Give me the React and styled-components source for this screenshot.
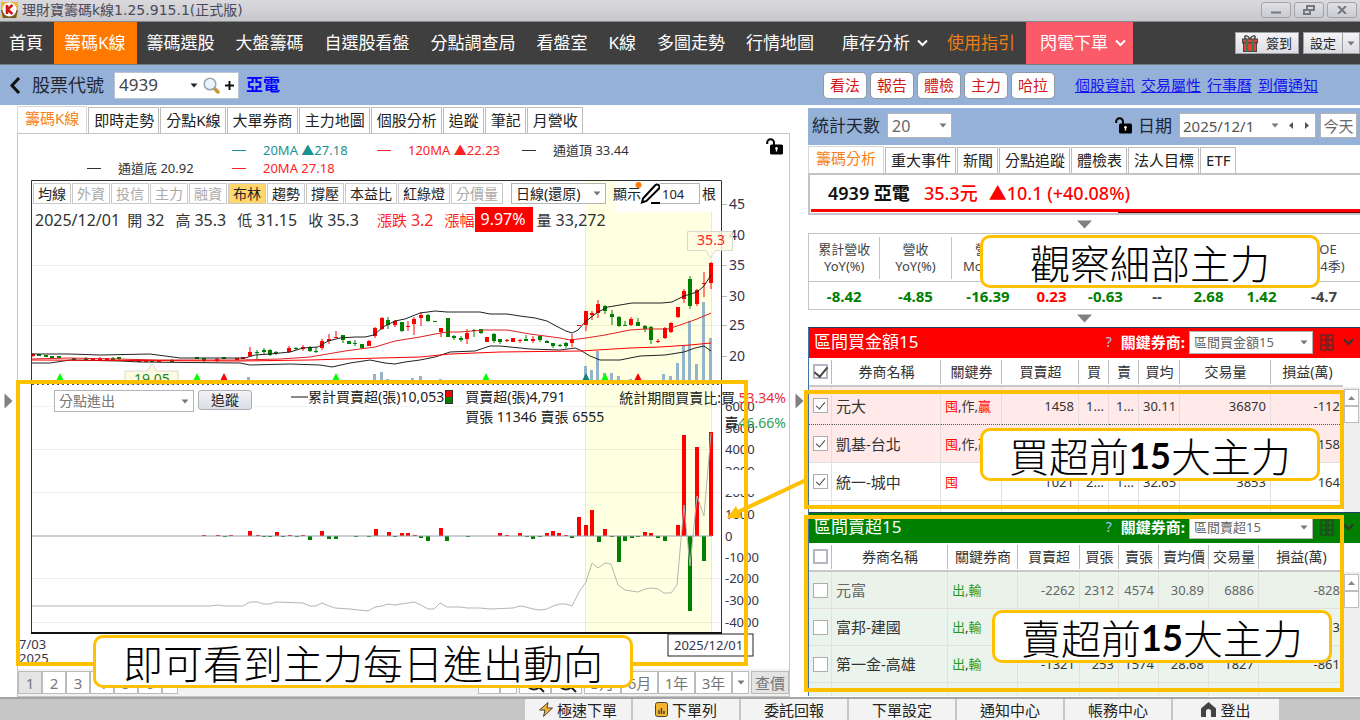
import styled, { createGlobalStyle, css } from 'styled-components'

const GlobalStyle = createGlobalStyle`
  * {
    box-sizing: border-box;
  }

  body {
    margin: 0;
    background: #fff;
    color: #222;
    font-family: 'Noto Sans', 'Noto Sans CJK TC', sans-serif;
    font-size: 15px;
    line-height: 20px;
  }

  button,
  input,
  select {
    margin: 0;
    padding: 0;
    border-radius: 0;
    font: inherit;
    color: inherit;
  }
`

/* ---------- Shell ---------- */

const Page = styled.div`
  position: relative;
  display: flex;
  flex-direction: column;
  min-height: 100vh;
  overflow: hidden;
  white-space: nowrap;
`

const TitleBar = styled.header`
  display: flex;
  align-items: center;
  height: 22px;
  padding: 0 3px 2px 1px;
  border-bottom: 1px solid #88888c;
  background: linear-gradient(#dadade, #c7c8cd);
`

const AppTitle = styled.h1`
  flex: 1;
  margin: 0 0 0 4px;
  color: #4c4958;
  font: 400 14px/18px 'DejaVu Sans', 'Noto Sans CJK TC', sans-serif;
`

const WindowButtons = styled.div`
  display: flex;
  gap: 3px;
`

const WindowButton = styled.button`
  display: grid;
  place-items: center;
  width: 30px;
  height: 16px;
  border: 1px solid #a3a3a8;
  border-radius: 3px;
  background: linear-gradient(#e0e0e4, #cbccd1);
`

const Nav = styled.nav`
  display: flex;
  align-items: stretch;
  height: 43px;
  border-bottom: 1px solid #77797d;
  background: #3f3f3f;

  > a:first-child {
    padding-left: 9px;
  }
`

const NavItem = styled.a`
  display: flex;
  align-items: center;
  gap: 7px;
  padding: 0 ${p => (p.$hot ? '7px 0 14px' : p.$menu ? '9px 0 17px' : '11px 0 10px')};
  background: ${p => (p.$active ? '#ff7800' : p.$hot ? '#fb5a69' : 'none')};
  color: ${p => (p.$accent ? '#ef7d16' : '#fff')};
  font-size: 17px;
  font-weight: 400;
  text-decoration: none;
`

const NavTools = styled.div`
  display: flex;
  align-items: center;
  gap: 4px;
  margin-left: auto;
`

const ToolButton = styled.button`
  display: flex;
  align-items: center;
  justify-content: center;
  gap: 8px;
  height: 22px;
  padding: 0 6px;
  border: 1px solid #9fa0a5;
  background: linear-gradient(#f4f4f7, #dcdde3);
  font-size: 13px;
`

const SplitButton = styled.div`
  display: flex;

  button + button {
    padding: 0 4px;
    border-left: 0;
  }
`

const StockBar = styled.section`
  display: flex;
  align-items: center;
  height: 40px;
  padding: 0 42px 0 9px;
  background: #95b1d7;
`

const BackButton = styled.button`
  display: flex;
  margin-right: 11px;
  border: 0;
  background: none;
`

const FieldLabel = styled.label`
  color: #1d2733;
  font-size: ${p => p.$size || 18}px;
`

const CodeBox = styled.div`
  display: flex;
  align-items: center;
  gap: 5px;
  width: 125px;
  height: 27px;
  margin: 0 7px 0 10px;
  padding: 0 4px;
  border: 1px solid #b9c4d4;
  background: #fff;

  input {
    flex: 1;
    min-width: 0;
    border: 0;
    color: #444;
    font-size: 17px;
  }
`

const IconButton = styled.button`
  display: flex;
  border: 0;
  background: none;
`

const StockName = styled.strong`
  flex: 1;
  color: #00f;
  font-size: 17px;
`

const PillGroup = styled.div`
  display: flex;
  gap: 3px;
  margin-right: 20px;
`

const Pill = styled.button`
  width: 44px;
  height: 27px;
  border: 1px solid #8f98a5;
  border-radius: 5px;
  background: #fff;
  color: #d01a1a;
  font-size: 15px;
`

const StockLinks = styled.div`
  display: flex;
  gap: 6px;

  a {
    color: #1414f0;
    font-size: 15px;
  }
`

const Body = styled.main`
  flex: 1;
  display: grid;
  grid-template-columns: 17px minmax(0, 773fr) 18px minmax(0, 552fr);
`

const Splitter = styled.div`
  display: grid;
  place-items: center;
`

const Column = styled.div`
  display: flex;
  flex-direction: column;
  padding-top: ${p => p.$top}px;
`

/* ---------- Tabs ---------- */

const Tabs = styled.div`
  display: flex;
  align-items: flex-end;
  gap: 1px;
  height: ${p => p.$height}px;
`

const Tab = styled.button`
  height: 26px;
  padding: 0 4px 2px 5px;
  border: 1px solid #bdbdbd;
  border-bottom: 0;
  background: #fff;
  color: #222;

  ${p =>
    p.$active &&
    css`
      height: 27px;
      padding: 0 7px 4px 7px;
      border-color: #d8d8d8;
      color: #f58220;
    `}
`

/* ---------- Chart panel ---------- */

const ChartPanel = styled.section`
  flex: 1;
  display: flex;
  flex-direction: column;
  border: 1px solid #c4c4c4;
`

const LegendBar = styled.div`
  display: flex;
  justify-content: space-between;
  height: 45px;
  padding: 4px 6px 0 69px;
`

const Legend = styled.div`
  display: grid;
  grid-template-columns: repeat(4, 145px);
  grid-auto-rows: 18px;
  padding-top: 3px;
`

const LegendItem = styled.span`
  grid-column: ${p => p.$col};
  grid-row: ${p => p.$row};
  display: flex;
  align-items: center;
  gap: 17px;
  color: ${p => p.$color};
  font-size: 13px;

  &::before {
    content: '';
    width: 14px;
    height: 1px;
    background: currentColor;
  }
`

const ChartStack = styled.div`
  display: grid;

  > * {
    grid-area: 1 / 1;
    min-width: 0;
  }
`

const ChartSvg = styled.svg`
  display: block;
  width: 100%;
`

const ChartControls = styled.div`
  z-index: 1;
  padding: 4px 0 0 15px;
`

const Toolbar = styled.div`
  display: flex;
  align-items: center;
  gap: 1px;
  height: 21px;
`

const Toggle = styled.button`
  height: 21px;
  padding: 0 4px;
  border: 1px solid #c9c9c9;
  background: ${p => (p.$on ? '#ffd76a' : '#fff')};
  color: ${p => (p.$off ? '#aaa' : '#222')};
  font-size: 14px;
  line-height: 18px;
`

const SelectBox = styled.div`
  display: flex;
  align-items: center;
  width: ${p => p.$width}px;
  height: ${p => p.$height || 22}px;
  margin-left: ${p => p.$lead || 0}px;
  padding: 0 4px;
  border: 1px solid #b4b4b4;
  background: #fff;
  color: ${p => p.$color || '#555'};
  font-size: ${p => p.$size || 14}px;

  select {
    flex: 1;
    min-width: 0;
    border: 0;
    background: none;
    appearance: none;
  }

  svg {
    pointer-events: none;
  }
`

const BarCount = styled.label`
  display: flex;
  align-items: center;
  margin-left: 6px;
  font-size: 14px;

  svg {
    margin: 0 0 0 -6px;
  }

  input {
    width: 40px;
    height: 21px;
    margin-right: 2px;
    border: 1px solid #b4b4b4;
    border-left: 0;
    padding-left: 2px;
    font-size: 13px;
  }
`

const Ohlc = styled.div`
  display: flex;
  align-items: center;
  gap: 11px;
  height: 25px;
  margin-top: 3px;
  padding-left: 2px;
  font-size: 16px;
`

const OhlcItem = styled.span`
  display: flex;
  align-items: center;
  gap: 4px;
  margin-left: ${p => p.$lead || 0}px;
  color: ${p => (p.$up ? '#f22' : '#333')};

  b {
    font-size: 15px;
    font-weight: 400;
  }
`

const UpBadge = styled.span`
  padding: 2px 7px 3px 6px;
  background: #f00;
  color: #fff;
`

const FlowRow = styled.div`
  display: flex;
  align-items: flex-start;
  margin-top: 158px;
  padding-left: 21px;
  font-size: 14px;
`

const TraceButton = styled.button`
  width: 54px;
  height: 20px;
  margin: 0 39px 0 4px;
  border: 1px solid #adafb8;
  border-radius: 3px;
  background: linear-gradient(#f3f3f7, #dcdee6);
  line-height: 16px;
`

const CumulativeKey = styled.span`
  display: flex;
  align-items: center;
  height: 14px;

  &::before {
    content: '';
    width: 17px;
    height: 2px;
    background: #888;
  }

  i {
    width: 8px;
    height: 14px;
    margin-left: 1px;
    border: 1px solid #333;
    background: linear-gradient(#f00 50%, #008000 50%);
  }
`

const DayFlow = styled.div`
  flex: 1;
  margin: -3px 0 0 12px;
`

const RatioFlow = styled.div`
  margin: -5px 3px 0 0;
  text-align: right;
  line-height: 25px;
`

const Tone = styled.span`
  color: ${p => p.$color};
`

const Pager = styled.div`
  flex: 1;
  display: flex;
  align-items: center;
  min-height: 27px;
  background: #f1f1f1;
`

const PagerButton = styled.button`
  display: grid;
  place-items: center;
  width: ${p => p.$width || 24}px;
  height: 23px;
  border: 1px solid #bbb;
  margin-right: ${p => p.$gap || 0}px;
  background: ${p => (p.$on ? '#e4e4e4' : '#fff')};
  color: #777;
  font-size: 15px;
`

const PagerSpace = styled.span`
  flex: 1;
`

/* ---------- Side panel ---------- */

const RangeBar = styled.div`
  display: flex;
  align-items: center;
  height: 37px;
  padding: 0 3px 2px 4px;
  background: #95b1d7;

  > svg {
    margin: 0 6px 0 auto;
  }
`

const DateBox = styled.div`
  display: flex;
  align-items: center;
  width: 137px;
  height: 25px;
  margin: 0 4px 0 7px;
  border: 1px solid #b4b4b4;
  background: #fff;
  color: #555;

  input {
    flex: 1;
    min-width: 0;
    border: 0;
    padding-left: 3px;
    font-size: 15px;
  }

  button {
    width: 16px;
    justify-content: center;
  }
`

const TodayButton = styled.button`
  width: 37px;
  height: 25px;
  border: 1px solid #b4b4b4;
  background: #fff;
  color: #666;
`

const Quote = styled.div`
  height: 42px;
  padding: 4px 0 0 1px;
  border: 2px solid #c3c3c8;
  border-right: 0;

  p {
    display: flex;
    gap: 14px;
    margin: 0;
    padding: 0 0 2px 17px;
    color: #f00;
    font-size: 18px;
    font-weight: 500;
    line-height: 28px;
  }

  strong {
    color: #111;
    font-weight: 600;
  }

  span + span {
    margin-left: -3px;
  }
`

const RangeLine = styled.div`
  height: 3px;
  border-top: 3px solid #f00;

  &::after {
    content: '';
    display: block;
    width: 44%;
    height: 1px;
    margin-left: auto;
    background: #600;
  }
`

const Fold = styled.button`
  display: grid;
  place-items: center;
  height: ${p => p.$height}px;
  border: 0;
  background: none;
`

const Metrics = styled.table`
  width: 100%;
  border: 1px solid #c4c4c4;
  border-right: 0;
  border-collapse: collapse;
  table-layout: fixed;

  th {
    height: 48px;
    padding: 0;
    border-bottom: 1px solid #c4c4c4;
    color: #444;
    font-size: 13px;
    font-weight: 400;
    line-height: 17px;
    background: linear-gradient(#c4c4c4, #c4c4c4) right center / 1px 42px no-repeat;
  }

  th:nth-child(n + 3) {
    background: none;
  }

  td {
    height: 28px;
    padding: 0;
    font-size: 15px;
    font-weight: 700;
    text-align: center;
  }
`

const Section = styled.section`
  border-top: 1px solid #24406b;
  border-left: 1px solid #3f73a8;
`

const SectionHead = styled.div`
  display: flex;
  align-items: center;
  height: 30px;
  padding: 0 6px 2px 5px;
  background: ${p => p.$color};
  color: #fff;

  h2 {
    flex: 1;
    margin: 0;
    font-size: 17px;
    font-weight: 400;
  }

  label {
    margin: 0 4px 0 9px;
    font-size: 15px;
    font-weight: 700;
  }

  button + button {
    margin-left: 9px;
  }

  button {
    margin-left: 7px;
  }
`

const HelpMark = styled.span`
  color: #a9c4ee;
  font-size: 14px;
`

const TableArea = styled.div`
  display: grid;
  grid-template-columns: minmax(0, 1fr) 17px;
  height: ${p => p.$height}px;
  overflow: hidden;
`

const BrokerTable = styled.table`
  width: 100%;
  align-self: start;
  border-collapse: separate;
  border-spacing: 0;
  table-layout: fixed;
  font-size: 13px;

  th {
    height: 29px;
    padding: 0;
    border-bottom: 2px solid #c8c8c8;
    background: linear-gradient(#bbb, #bbb) right 2px / 1px 24px no-repeat;
    color: #333;
    font-size: 14px;
    font-weight: 400;
    overflow: hidden;
  }

  td {
    height: ${p => p.$row}px;
    padding: 0 4px;
    border-right: 1px solid #e3dfe0;
    border-bottom: 1px solid #e3dfe0;
    text-align: right;
    overflow: hidden;
  }

  td:nth-child(-n + 3) {
    text-align: left;
    font-size: 15px;
  }

  td:nth-child(3) {
    font-size: 13px;
  }

  td:last-child {
    border-right: 0;
  }
`

const BrokerRow = styled.tr`
  background: ${p => p.$fill};
  color: ${p => (p.$dim ? '#666' : '#333')};

  ${p =>
    p.$focused &&
    css`
      td {
        border-bottom: 1px dotted #555;
      }
    `}
`

const Check = styled.input`
  appearance: none;
  display: grid;
  place-items: center;
  width: 15px;
  height: 15px;
  margin: 0 auto;
  border: ${p => (p.$head ? '2px solid #b3b6c4' : '1px solid #adadad')};
  background: #fff;

  &:checked::after {
    content: '';
    width: ${p => (p.$head ? 6 : 4)}px;
    height: ${p => (p.$head ? 11 : 8)}px;
    margin-top: -2px;
    border: solid #444;
    border-width: 0 ${p => (p.$head ? '2px 2px' : '1px 1px')} 0;
    transform: rotate(40deg);
  }
`

const CheckCell = styled.td`
  && {
    padding: 0;
  }
`

const ScrollTrack = styled.div`
  display: flex;
  flex-direction: column;
  padding: 31px 1px 3px 1px;
  background: linear-gradient(#fff 29px, #eee 29px);
`

const ScrollButton = styled.button`
  display: grid;
  place-items: center;
  height: 17px;
  margin-top: ${p => (p.$end ? 'auto' : 0)};
  border: 1px solid #bdbdbd;
  background: #fff;
`

/* ---------- Footer ---------- */

const Footer = styled.footer`
  display: flex;
  justify-content: flex-end;
  gap: 2px;
  height: 23px;
  padding-right: 81px;
  border-top: 2px solid #a5a5a5;
  background: #c6c6c6;
`

const FooterButton = styled.button`
  display: flex;
  align-items: center;
  justify-content: center;
  gap: 4px;
  width: 106px;
  border: 0;
  background: #f3f3f3;
  font-size: 15px;
`

/* ---------- Guide layer, lies over the whole page ---------- */

const Highlight = styled.div`
  position: absolute;
  z-index: 2;
  left: ${p => p.$x}px;
  top: ${p => p.$y}px;
  width: ${p => p.$w}px;
  height: ${p => p.$h}px;
  border: 4px solid #ffc000;
  pointer-events: none;
`

const Callout = styled.p`
  position: absolute;
  z-index: 4;
  left: ${p => p.$x}px;
  top: ${p => p.$y}px;
  display: flex;
  align-items: center;
  justify-content: center;
  width: ${p => p.$w || 340}px;
  height: 53px;
  margin: 0;
  border: 3px solid #ffc000;
  border-radius: 10px;
  background: #fff;
  color: #000;
  font-family: 'Noto Sans CJK TC', sans-serif;
  font-size: 40px;
  font-weight: 300;

  b {
    font-family: Lato, sans-serif;
    font-size: 36px;
    font-weight: 700;
  }
`

const Pointer = styled.svg`
  position: absolute;
  z-index: 3;
  left: 724px;
  top: 476px;
  pointer-events: none;
`

/* ---------- Icons ---------- */

const Caret = ({ color = '#777' }) => (
  <svg width="8" height="5" viewBox="0 0 8 5">
    <path d="M0.5 0.5h7L4 4.5z" fill={color} />
  </svg>
)

const Chevron = ({ color = '#fff' }) => (
  <svg width="11" height="8" viewBox="0 0 11 8" fill="none" stroke={color} strokeWidth="2">
    <path d="M1 1.5l4.5 4.5L10 1.5" />
  </svg>
)

const SideArrow = () => (
  <svg width="9" height="16" viewBox="0 0 9 16">
    <path d="M0.5 0.5L8.5 8L0.5 15.5z" fill="#808080" />
  </svg>
)

const FoldArrow = () => (
  <svg width="15" height="9" viewBox="0 0 15 9">
    <path d="M0 0.5h15L7.5 8.5z" fill="#808080" />
  </svg>
)

const LockIcon = () => (
  <svg width="17" height="17" viewBox="0 0 17 17">
    <path d="M1.2 6V4.6a3.4 3.4 0 0 1 6.8 0V8" fill="none" stroke="#000" strokeWidth="2" />
    <rect x="4" y="6.5" width="13" height="10" rx="1.5" fill="#000" />
    <path d="M10.5 9a1.4 1.4 0 0 1 .7 2.600v2h-1.400v-2a1.4 1.4 0 0 1 .7-2.600z" fill="#fff" />
  </svg>
)

const LogoIcon = () => (
  <svg width="17" height="18" viewBox="0 0 17 18">
    <path d="M0 1h17v6l-1 10H1L0 7z" fill="#e3b93c" />
    <path d="M0 9l2 8h13l2-8z" fill="#7a5a20" />
    <circle cx="8.500" cy="8.500" r="7" fill="#fff" />
    <path d="M6 4v9M11.500 4L6.500 8.500l5 4.500" fill="none" stroke="#d01818" strokeWidth="2.600" />
  </svg>
)

const SearchIcon = () => (
  <svg width="17" height="17" viewBox="0 0 17 17">
    <path d="M11 11l4 4" stroke="#c9962f" strokeWidth="3.500" strokeLinecap="round" />
    <circle cx="7" cy="7" r="5.800" fill="#e9f4fb" stroke="#9aa7b3" strokeWidth="1.500" />
  </svg>
)

const PlusIcon = () => (
  <svg width="9" height="9" viewBox="0 0 9 9">
    <path d="M4.500 0v9M0 4.500h9" stroke="#111" strokeWidth="2" />
  </svg>
)

const GiftIcon = () => (
  <svg width="16" height="17" viewBox="0 0 16 17">
    <path d="M8 4C6 0 2 0 3 3s5 1 5 1zM8 4c2-4 6-4 5-1s-5 1-5 1z" fill="none" stroke="#444" strokeWidth="1.500" />
    <rect x="0.500" y="4" width="15" height="4" fill="#e2403a" stroke="#444" />
    <rect x="1.500" y="8" width="13" height="8.500" fill="#e2403a" stroke="#444" />
    <path d="M5 4v12.500M11 4v12.500" stroke="#3b7a4a" strokeWidth="2" />
  </svg>
)

const PenIcon = () => (
  <svg width="25" height="23" viewBox="0 0 25 23">
    <circle cx="3.500" cy="3" r="3" fill="#ff7800" />
    <path d="M8 16.500L20 3.500a2 2 0 0 1 4 3L11.500 19l-4.500 1.500z" fill="#fff" stroke="#000" strokeWidth="2" />
    <path d="M16 21h9" stroke="#000" strokeWidth="2" />
  </svg>
)

const GridIcon = () => (
  <svg width="14" height="17" viewBox="0 0 14 17" fill="none" stroke="#333" strokeOpacity="0.75" strokeWidth="1.500">
    <path d="M1 1h5v15H1zM8 1h5v15H8zM1 6h5M8 6h5M1 11h5M8 11h5" />
  </svg>
)

const ZoomIcon = () => (
  <svg width="24" height="20" viewBox="0 0 24 20" fill="none" stroke="#222" strokeWidth="2">
    <circle cx="11" cy="9" r="7.500" />
    <path d="M16 14l5 5M7.500 9h7" />
  </svg>
)

const BoltIcon = () => (
  <svg width="14" height="15" viewBox="0 0 14 15">
    <path d="M9 0.500L0.500 8H6L4.500 14.500L13.500 6H8z" fill="#f7b52c" stroke="#444" />
  </svg>
)

const ReportIcon = () => (
  <svg width="13" height="15" viewBox="0 0 13 15">
    <rect x="0.500" y="0.500" width="12" height="14" rx="2" fill="#f7b52c" stroke="#444" />
    <path d="M4 12V8M6.500 12V6M9 12V9" stroke="#444" strokeWidth="1.500" />
  </svg>
)

const HomeIcon = () => (
  <svg width="15" height="15" viewBox="0 0 15 15">
    <path d="M7.500 0L15 6.500V15h-5V9.500a2.500 2.500 0 0 0-5 0V15H0V6.500z" fill="#444" />
  </svg>
)

/* ---------- Chart data ---------- */

// [x, body top, body bottom, high, low, up]
const candles = [
  [33, 354, 356, 353, 357, 1], [39, 354, 356, 354, 356, 0], [46, 355, 357, 355, 357, 0],
  [52, 356, 358, 356, 358, 0], [59, 356, 358, 356, 358, 0], [74, 358, 360, 358, 360, 0],
  [86, 358, 360, 357, 360, 0], [93, 359, 361, 358, 361, 1], [100, 358, 361, 357, 361, 1],
  [107, 358, 361, 358, 361, 1], [113, 358, 360, 357, 361, 0], [119, 357, 359, 357, 360, 0],
  [132, 360, 361, 359, 361, 0], [139, 360, 362, 360, 362, 1], [146, 360, 362, 360, 362, 1],
  [152, 361, 362, 360, 362, 0], [159, 360, 362, 360, 362, 1], [172, 360, 362, 359, 362, 0],
  [197, 357, 359, 357, 359, 0], [204, 358, 361, 358, 362, 0], [217, 359, 361, 358, 362, 1],
  [224, 357, 359, 357, 359, 0], [237, 358, 360, 358, 360, 1], [243, 357, 359, 357, 359, 1],
  [250, 352, 356, 347, 356, 1], [257, 352, 353, 350, 359, 0], [264, 350, 352, 348, 354, 0],
  [270, 350, 355, 349, 356, 0], [276, 352, 353, 351, 355, 0], [289, 348, 352, 346, 353, 1],
  [296, 348, 349, 347, 350, 0], [303, 347, 349, 345, 351, 1], [310, 347, 351, 346, 352, 0],
  [316, 351, 352, 347, 353, 0], [322, 341, 348, 339, 350, 1], [329, 339, 341, 334, 344, 1],
  [336, 337, 338, 331, 338, 1], [343, 335, 340, 335, 343, 0], [349, 341, 344, 341, 344, 0],
  [355, 343, 344, 340, 346, 0], [362, 344, 348, 344, 349, 0], [369, 341, 346, 340, 346, 1],
  [375, 328, 336, 327, 338, 1], [382, 318, 329, 317, 330, 1], [388, 320, 325, 317, 329, 0],
  [395, 321, 325, 320, 327, 1], [402, 322, 331, 322, 332, 0], [408, 326, 327, 321, 331, 1],
  [414, 319, 324, 317, 335, 1], [421, 315, 318, 312, 326, 1], [428, 315, 321, 314, 322, 0],
  [435, 321, 322, 321, 322, 0], [441, 328, 332, 328, 337, 1], [448, 318, 337, 318, 337, 0],
  [454, 336, 338, 335, 340, 0], [461, 338, 340, 336, 342, 0], [467, 333, 339, 329, 344, 1],
  [474, 330, 331, 329, 337, 0], [481, 329, 333, 329, 334, 0], [487, 337, 342, 337, 342, 1],
  [494, 334, 341, 333, 343, 0], [500, 339, 342, 339, 344, 0], [507, 340, 341, 339, 342, 1],
  [513, 338, 342, 338, 342, 1], [520, 340, 341, 339, 343, 1], [526, 339, 341, 335, 341, 0],
  [533, 339, 341, 336, 343, 1], [540, 336, 340, 336, 342, 0], [547, 341, 343, 340, 343, 0],
  [553, 343, 346, 343, 348, 0], [560, 345, 346, 344, 347, 0], [566, 343, 346, 342, 348, 0],
  [572, 339, 343, 334, 347, 1], [579, 325, 326, 325, 326, 1], [586, 311, 325, 311, 331, 1],
  [592, 313, 315, 311, 320, 1], [598, 304, 313, 300, 318, 1], [605, 306, 311, 305, 314, 0],
  [612, 314, 317, 310, 325, 0], [619, 317, 326, 316, 327, 0], [625, 325, 326, 321, 326, 0],
  [631, 319, 325, 317, 326, 1], [638, 322, 326, 318, 326, 0], [645, 326, 329, 325, 332, 0],
  [651, 327, 340, 326, 344, 0], [658, 341, 342, 339, 343, 1], [665, 328, 338, 327, 339, 1],
  [671, 323, 332, 322, 333, 1], [678, 307, 317, 307, 318, 1], [684, 291, 299, 289, 303, 1],
  [690, 279, 306, 276, 309, 0], [697, 290, 304, 289, 306, 1], [704, 283, 284, 272, 297, 1],
  [711, 263, 283, 262, 289, 1],
]

const volumes = [
  [249, 377], [375, 374], [382, 372], [388, 379], [413, 378], [421, 376], [441, 379],
  [586, 366], [592, 370], [598, 351], [605, 373], [612, 373], [619, 376], [631, 379],
  [664, 374], [671, 376], [678, 363], [684, 345], [690, 321], [697, 364], [704, 302], [711, 338],
]

// [x, signed bar length]
const netBuys = [
  [204, 1], [218, 1], [225, -1], [231, 1], [250, 5], [258, 1], [264, -1], [270, -1], [277, 4],
  [283, -1], [290, 1], [297, -1], [303, 1], [310, -4], [322, 5], [329, -3], [336, -3], [356, -1],
  [369, -1], [376, 7], [389, 4], [395, -1], [402, 3], [408, 3], [415, 1], [421, -2], [428, -5],
  [441, 8], [447, -5], [468, -1], [500, 3], [507, 1], [520, 3], [527, -1], [533, -3], [540, -1],
  [547, 3], [553, 5], [559, 3], [566, 1], [572, -2], [579, 19], [586, 11], [592, 26], [599, -6],
  [605, 7], [612, -1], [619, -26], [625, -5], [632, -2], [638, -1], [645, 4], [651, 3], [658, -2],
  [665, -5], [678, 11], [684, 101], [690, -75], [697, 89], [704, -25], [711, 104],
]

const upperBand =
  '31,354 70,354 100,355 150,354 165,356 180,358 245,358 255,355 270,354 290,352 303,348 318,347 328,341 340,338 355,337 365,337 374,335 383,327 395,321 405,319 420,313 435,311 447,312 480,312 490,314 507,314 520,316 535,318 547,321 558,327 566,331 572,333 578,330 586,321 598,312 608,307 620,305 632,303 662,303 672,302 684,296 697,292 704,286 711,275'
const lowerBand =
  '31,363 50,363 70,360 120,361 140,362 240,363 250,365 290,364 320,365 332,367 350,363 370,360 385,363 395,364 405,362 420,360 435,357 450,352 475,351 490,346 500,346 530,349 560,350 575,348 580,350 590,356 600,360 620,360 640,356 665,355 684,352 695,348 704,346 711,351'
const ma20 =
  '31,359 70,358 160,360 240,360 280,359 310,357 345,351 375,347 395,341 420,337 435,334 447,332 460,332 485,330 507,330 530,334 560,338 570,340 586,338 605,335 630,330 645,329 668,329 680,325 697,319 711,313'
const ma120 =
  '31,360 240,361 310,360 380,358 420,357 450,354 500,352 580,351 630,348 660,347 690,345 711,343'
const cumulative =
  '31,606 210,606 218,605 225,606 243,606 250,602 258,602 263,604 270,604 276,602 303,603 310,606 316,606 322,603 329,606 335,608 350,609 368,611 375,607 382,606 388,604 395,605 414,602 421,605 428,609 434,609 440,603 447,607 460,607 467,608 480,608 490,609 513,608 520,606 526,607 533,609 540,610 547,609 553,606 560,604 566,604 572,606 579,592 586,582 592,563 598,568 605,563 611,564 618,585 625,590 638,592 645,589 651,588 658,589 664,593 671,593 677,585 684,505 690,566 697,496 704,516 711,433'

const signals = [
  [60, '#0f0'], [197, '#0f0'], [224, '#f00'], [336, '#0f0'],
  [486, '#0f0'], [586, '#108080'], [605, '#0f0'], [638, '#f00'],
]

const priceTicks = [[45, 204], [40, 235], [35, 265], [30, 296], [25, 325], [20, 356]]
const flowTicks = [
  [6000, 406], [5000, 428], [4000, 449], [3000, 471], [2000, 492], [1000, 514], [0, 536],
  [-1000, 557], [-2000, 578], [-3000, 600], [-4000, 622],
]

const StockChart = () => (
  <ChartSvg viewBox="18 179 771 490" role="img" aria-label="籌碼K線">
    <rect x="586" y="181" width="125" height="452" fill="#ffffe1" />
    <rect x="616" y="181" width="104" height="31" fill="#fff" />
    <path d="M585.500 212V633M711.500 212V633" stroke="#e8e8dc" />
    {[265, 325, 449, 492, 578, 622].map(y => (
      <path key={y} d={`M32 ${y}.5H721`} stroke="#000" strokeOpacity="0.07" />
    ))}
    <path d="M32 406.500H721" stroke="#000" strokeOpacity="0.05" />

    {volumes.map(([x, y]) => (
      <rect key={x} x={x - 2} y={y} width="3" height={383 - y} fill="#94b4cc" />
    ))}
    {candles.map(([x, top, bottom, high, low, up]) => (
      <g key={x} fill={up ? '#f00' : '#008000'}>
        <rect x={x - 0.5} y={high} width="1" height={low - high} />
        <rect x={x - 2} y={top} width="4" height={bottom - top} />
      </g>
    ))}
    <g fill="none" strokeWidth="1">
      <polyline points={upperBand} stroke="#222" />
      <polyline points={lowerBand} stroke="#222" />
      <polyline points={ma20} stroke="#d22" />
      <polyline points={ma120} stroke="#f00" />
    </g>
    {signals.map(([x, color]) => (
      <path key={x} d={`M${x} 373l4 8h-8z`} fill={color} />
    ))}

    <path d="M125 371h22l5-7l5 7h21v14h-53z" fill="#fffbe2" stroke="#d8d8d0" />
    <text x="152" y="384" fill="#228b22" fontSize="14" textAnchor="middle">19.05</text>
    <rect x="32" y="385" width="553" height="20" fill="#fff" />
    <path d="M32 384.500H721" stroke="#555" strokeDasharray="2 3" />

    {netBuys.map(([x, v]) => (
      <rect key={x} x={x - 2} y={v > 0 ? 536 - v : 536} width="4" height={Math.abs(v)} fill={v > 0 ? '#f00' : '#008000'} />
    ))}
    <polyline points={cumulative} fill="none" stroke="#b5b5b5" />
    <path d="M32 536H712" stroke="#93a0ae" />

    <path d="M31.500 633V180.500H721.500V633" fill="none" stroke="#333" />
    <path d="M31 633H722" stroke="#111" strokeWidth="2" />
    <g fill="#36344a" fontSize="14">
      {priceTicks.map(([v, y]) => (
        <g key={v}>
          <path d={`M722 ${y}.5h5`} stroke="#bbb" />
          <text x="729" y={y + 5}>{v}</text>
        </g>
      ))}
    </g>
    <g fill="#36344a" fontSize="13">
      {flowTicks.map(([v, y]) => (
        <text key={v} x="725" y={y + 5}>{v}</text>
      ))}
      <rect x="724" y="470" width="36" height="24" fill="#fff" />
      <text x="19" y="649">7/03</text>
      <text x="19" y="663">2025</text>
      <rect x="668" y="634" width="85" height="22" fill="#fff" stroke="#222" />
      <text x="674" y="650">2025/12/01</text>
    </g>

    <path d="M687.500 231.500h45v19h-17l-5 7l-5-7h-18z" fill="#fffbe2" fillOpacity="0.8" stroke="#d8d8d0" />
    <text x="711" y="245" fill="#f22" fontSize="14" textAnchor="middle">35.3</text>
  </ChartSvg>
)

/* ---------- Lists ---------- */

const chartTabs = ['籌碼K線', '即時走勢', '分點K線', '大單券商', '主力地圖', '個股分析', '追蹤', '筆記', '月營收']
const sideTabs = ['籌碼分析', '重大事件', '新聞', '分點追蹤', '體檢表', '法人目標', 'ETF']
const offToggles = ['外資', '投信', '主力', '融資', '分價量']
const toggles = ['均線', '外資', '投信', '主力', '融資', '布林', '趨勢', '撐壓', '本益比', '紅綠燈', '分價量']

const metrics = [
  [71, '累計營收', 'YoY(%)', '-8.42'],
  [72, '營收', 'YoY(%)', '-4.85'],
  [73, '營收', 'MoM(%)', '-16.39'],
  [54, '', '', '0.23'],
  [54, '', '', '-0.63'],
  [49, '', '', '--'],
  [54, '', '', '2.68'],
  [52, '', '', '1.42'],
  [73, 'ROE', '(近4季)', '-4.7'],
]
const metricColor = v => (v === '0.23' ? '#f00' : v === '--' || v === '-4.7' ? '#444' : '#008000')

const buyTable = {
  widths: [23, 109, 61, 77, 30, 30, 41, 91, 73],
  heads: ['券商名稱', '關鍵券', '買賣超', '買', '賣', '買均', '交易量', '損益(萬)'],
  rows: [
    ['元大', '囤,作,贏', '1458', '1...', '1...', '30.11', '36870', '-112'],
    ['凱基-台北', '囤,作,贏', '', '', '', '', '', '158'],
    ['統一-城中', '囤', '1021', '2...', '1...', '32.65', '3853', '164'],
    ['', '', '', '', '', '', '', ''],
  ],
  fills: ['#ffe9e9', '#ffe9e9', '#fff', '#fff'],
}

const sellTable = {
  widths: [23, 116, 70, 62, 39, 40, 50, 50, 85],
  heads: ['券商名稱', '關鍵券商', '買賣超', '買張', '賣張', '賣均價', '交易量', '損益(萬)'],
  rows: [
    ['元富', '出,輸', '-2262', '2312', '4574', '30.89', '6886', '-828'],
    ['富邦-建國', '出,輸', '', '', '', '', '', '3'],
    ['第一金-高雄', '出,輸', '-1321', '253', '1574', '28.68', '1827', '-861'],
    ['', '', '', '', '', '', '', ''],
  ],
  fills: ['#eaf2e9', '#eaf4ec', '#eaf4ec', '#eaf4ec'],
}

const Tags = ({ value }) =>
  value.split(',').map((tag, i) => (
    <span key={tag}>
      {i > 0 && ','}
      <Tone $color={tag === '作' ? '#333' : tag === '出' || tag === '輸' ? '#1f9a1f' : '#f00'}>{tag}</Tone>
    </span>
  ))

const Brokers = ({ title, color, height, option, data, buy }) => (
  <Section>
    <SectionHead $color={color}>
      <h2>{title}</h2>
      <HelpMark>?</HelpMark>
      <label htmlFor={option}>關鍵券商:</label>
      <SelectBox $width={124} $height={23} $size={13} $color="#666">
        <select id={option}>
          <option>{option}</option>
        </select>
        <Caret />
      </SelectBox>
      <IconButton aria-label="欄位"><GridIcon /></IconButton>
      <IconButton aria-label="收合"><Chevron color="#333" /></IconButton>
    </SectionHead>
    <TableArea $height={height}>
      <BrokerTable $row={buy ? 38 : 37}>
        <colgroup>
          {data.widths.map((w, i) => <col key={i} style={{ width: w }} />)}
        </colgroup>
        <thead>
          <tr>
            <th><Check $head type="checkbox" defaultChecked={buy} aria-label="全選" /></th>
            {data.heads.map(h => <th key={h}>{h}</th>)}
          </tr>
        </thead>
        <tbody>
          {data.rows.map((row, r) => (
            <BrokerRow key={r} $fill={data.fills[r]} $dim={!buy && r === 0} $focused={buy && r === 0}>
              <CheckCell>
                {row[0] && <Check type="checkbox" defaultChecked={buy} aria-label={row[0]} />}
              </CheckCell>
              {row.map((cell, c) => <td key={c}>{c === 1 && cell ? <Tags value={cell} /> : cell}</td>)}
            </BrokerRow>
          ))}
        </tbody>
      </BrokerTable>
      <ScrollTrack>
        <ScrollButton aria-label="向上"><svg width="7" height="4"><path d="M0 4h7L3.500 0z" fill="#888" /></svg></ScrollButton>
        <ScrollButton aria-label="捲軸" />
        <ScrollButton $end aria-label="向下"><Caret color="#888" /></ScrollButton>
      </ScrollTrack>
    </TableArea>
  </Section>
)

const App = () => (
  <>
    <GlobalStyle />
    <Page>
      <TitleBar>
        <LogoIcon />
        <AppTitle>理財寶籌碼k線1.25.915.1(正式版)</AppTitle>
        <WindowButtons>
          <WindowButton aria-label="最小化"><svg width="10" height="8"><path d="M0 6.500h10" stroke="#77777f" strokeWidth="2" /></svg></WindowButton>
          <WindowButton aria-label="還原"><svg width="12" height="10" fill="none" stroke="#77777f" strokeWidth="2"><path d="M4 4V1h7v4H8M1 5h6v4H1z" /></svg></WindowButton>
          <WindowButton aria-label="關閉"><svg width="10" height="8"><path d="M1 0l8 8M9 0L1 8" stroke="#77777f" strokeWidth="2" /></svg></WindowButton>
        </WindowButtons>
      </TitleBar>

      <Nav>
        <NavItem href="#home">首頁</NavItem>
        <NavItem href="#chip" $active>籌碼K線</NavItem>
        <NavItem href="#pick">籌碼選股</NavItem>
        <NavItem href="#market">大盤籌碼</NavItem>
        <NavItem href="#watch">自選股看盤</NavItem>
        <NavItem href="#branch">分點調查局</NavItem>
        <NavItem href="#room">看盤室</NavItem>
        <NavItem href="#kline">K線</NavItem>
        <NavItem href="#multi">多圖走勢</NavItem>
        <NavItem href="#map">行情地圖</NavItem>
        <NavItem href="#stock" $menu>庫存分析 <Chevron /></NavItem>
        <NavItem href="#guide" $accent>使用指引</NavItem>
        <NavItem href="#order" $hot>閃電下單 <Chevron /></NavItem>
        <NavTools>
          <ToolButton><GiftIcon />簽到</ToolButton>
          <SplitButton>
            <ToolButton>設定</ToolButton>
            <ToolButton aria-label="更多設定"><Caret /></ToolButton>
          </SplitButton>
        </NavTools>
      </Nav>

      <StockBar>
        <BackButton aria-label="返回">
          <svg width="12" height="17" viewBox="0 0 12 17"><path d="M10 1L3 8.500L10 16" fill="none" stroke="#111" strokeWidth="3" /></svg>
        </BackButton>
        <FieldLabel htmlFor="code">股票代號</FieldLabel>
        <CodeBox>
          <input id="code" defaultValue="4939" />
          <Caret color="#222" />
          <IconButton aria-label="搜尋"><SearchIcon /></IconButton>
          <IconButton aria-label="加入"><PlusIcon /></IconButton>
        </CodeBox>
        <StockName>亞電</StockName>
        <PillGroup>
          {['看法', '報告', '體檢', '主力', '哈拉'].map(t => <Pill key={t}>{t}</Pill>)}
        </PillGroup>
        <StockLinks>
          {['個股資訊', '交易屬性', '行事曆', '到價通知'].map(t => <a key={t} href="#info">{t}</a>)}
        </StockLinks>
      </StockBar>

      <Body>
        <Splitter><SideArrow /></Splitter>
        <Column $top={1}>
          <Tabs $height={27}>
            {chartTabs.map((t, i) => <Tab key={t} $active={i === 0}>{t}</Tab>)}
          </Tabs>
          <ChartPanel>
            <LegendBar>
              <Legend>
                <LegendItem $col={2} $row={1} $color="#1b9292">20MA ▲27.18</LegendItem>
                <LegendItem $col={3} $row={1} $color="#f22">120MA ▲22.23</LegendItem>
                <LegendItem $col={4} $row={1} $color="#333">通道頂 33.44</LegendItem>
                <LegendItem $col={1} $row={2} $color="#333">通道底 20.92</LegendItem>
                <LegendItem $col={2} $row={2} $color="#f22">20MA 27.18</LegendItem>
              </Legend>
              <LockIcon />
            </LegendBar>
            <ChartStack>
              <StockChart />
              <ChartControls>
                <Toolbar>
                  {toggles.map(t => (
                    <Toggle key={t} $on={t === '布林'} $off={offToggles.includes(t)}>{t}</Toggle>
                  ))}
                  <SelectBox $lead={7} $width={95} $height={21} $color="#222">
                    <select aria-label="週期"><option>日線(還原)</option></select>
                    <Caret />
                  </SelectBox>
                  <BarCount>
                    顯示
                    <PenIcon />
                    <input defaultValue="104" />
                    根
                  </BarCount>
                </Toolbar>
                <Ohlc>
                  <OhlcItem>2025/12/01</OhlcItem>
                  <OhlcItem $lead={-4}><b>開</b>32</OhlcItem>
                  <OhlcItem><b>高</b>35.3</OhlcItem>
                  <OhlcItem><b>低</b>31.15</OhlcItem>
                  <OhlcItem><b>收</b>35.3</OhlcItem>
                  <OhlcItem $up $lead={7}><b>漲跌</b>3.2</OhlcItem>
                  <OhlcItem $up><b>漲幅</b></OhlcItem>
                  <OhlcItem $lead={-11}><UpBadge>9.97%</UpBadge><b>量</b>33,272</OhlcItem>
                </Ohlc>
                <FlowRow>
                  <SelectBox $width={140} $height={22} $color="#777">
                    <select aria-label="指標"><option>分點進出</option></select>
                    <Caret />
                  </SelectBox>
                  <TraceButton>追蹤</TraceButton>
                  <CumulativeKey>累計買賣超(張)10,053<i /></CumulativeKey>
                  <DayFlow>
                    買賣超(張)4,791
                    <br />
                    買張 11346 賣張 6555
                  </DayFlow>
                  <RatioFlow>
                    統計期間買賣比:買 <Tone $color="#e8303a">53.34%</Tone>
                    <div>賣<Tone $color="#2f9e4f">46.66%</Tone></div>
                  </RatioFlow>
                </FlowRow>
              </ChartControls>
            </ChartStack>
            <Pager>
              <PagerButton $on>1</PagerButton>
              {[2, 3, 4, 5, 6].map(n => <PagerButton key={n}>{n}</PagerButton>)}
              <PagerButton $width={16} aria-label="下一頁" />
              <PagerSpace />
              <PagerButton $width={22} aria-label="往前" />
              <PagerButton $width={17} $gap={2} aria-label="往後" />
              <PagerButton $width={32} aria-label="縮小"><ZoomIcon /></PagerButton>
              <PagerButton $width={31} $gap={2} aria-label="放大"><ZoomIcon /></PagerButton>
              {['3月', '6月', '1年', '3年'].map(t => <PagerButton key={t} $width={37}>{t}</PagerButton>)}
              <PagerButton $width={17} $gap={2} aria-label="更多區間"><Caret /></PagerButton>
              <PagerButton $on $width={38}>查價</PagerButton>
            </Pager>
          </ChartPanel>
        </Column>

        <Splitter><SideArrow /></Splitter>
        <Column $top={3}>
          <RangeBar>
            <FieldLabel $size={17} htmlFor="days">統計天數</FieldLabel>
            <SelectBox $lead={7} $width={65} $height={25} $size={16} $color="#666">
              <select id="days"><option>20</option></select>
              <Caret />
            </SelectBox>
            <LockIcon />
            <FieldLabel $size={17} htmlFor="date">日期</FieldLabel>
            <DateBox>
              <input id="date" defaultValue="2025/12/1" />
              <IconButton aria-label="選日期"><Caret /></IconButton>
              <IconButton aria-label="前一天"><svg width="4" height="7"><path d="M4 0v7L0 3.500z" fill="#555" /></svg></IconButton>
              <IconButton aria-label="後一天"><svg width="4" height="7"><path d="M0 0v7L4 3.500z" fill="#555" /></svg></IconButton>
            </DateBox>
            <TodayButton>今天</TodayButton>
          </RangeBar>
          <Tabs $height={28}>
            {sideTabs.map((t, i) => <Tab key={t} $active={i === 0}>{t}</Tab>)}
          </Tabs>
          <Quote>
            <p><strong>4939 亞電</strong><span>35.3元</span><span>▲10.1 (+40.08%)</span></p>
            <RangeLine />
          </Quote>
          <Fold $height={18} aria-label="收合報價"><FoldArrow /></Fold>
          <Metrics>
            <colgroup>
              {metrics.map(([w], i) => <col key={i} style={{ width: w }} />)}
            </colgroup>
            <thead>
              <tr>{metrics.map(([, a, b], i) => <th key={i}>{a}<br />{b}</th>)}</tr>
            </thead>
            <tbody>
              <tr>{metrics.map(([, , , v]) => <td key={v}><Tone $color={metricColor(v)}>{v}</Tone></td>)}</tr>
            </tbody>
          </Metrics>
          <Fold $height={17} aria-label="收合指標"><FoldArrow /></Fold>
          <Brokers title="區間買金額15" color="#f00" height={154} option="區間買金額15" data={buyTable} buy />
          <Brokers title="區間賣超15" color="#008000" height={153} option="區間賣超15" data={sellTable} />
        </Column>
      </Body>

      <Footer>
        <FooterButton><BoltIcon />極速下單</FooterButton>
        <FooterButton><ReportIcon />下單列</FooterButton>
        <FooterButton>委託回報</FooterButton>
        <FooterButton>下單設定</FooterButton>
        <FooterButton>通知中心</FooterButton>
        <FooterButton>帳務中心</FooterButton>
        <FooterButton><HomeIcon />登出</FooterButton>
      </Footer>

      <Highlight $x={16} $y={380} $w={732} $h={286} />
      <Highlight $x={804} $y={390} $w={540} $h={119} />
      <Highlight $x={804} $y={515} $w={540} $h={177} />
      <Pointer width="84" height="46" viewBox="0 0 84 46">
        <path d="M82 4L14 36" stroke="#ffc000" strokeWidth="4" />
        <path d="M3 42L12 30L18 42z" fill="#ffc000" />
      </Pointer>
      <Callout $x={980} $y={235}>觀察細部主力</Callout>
      <Callout $x={980} $y={428}>買超前<b>15</b>大主力</Callout>
      <Callout $x={992} $y={610}>賣超前<b>15</b>大主力</Callout>
      <Callout $x={93} $y={635} $w={540}>即可看到主力每日進出動向</Callout>
    </Page>
  </>
)

export default App
